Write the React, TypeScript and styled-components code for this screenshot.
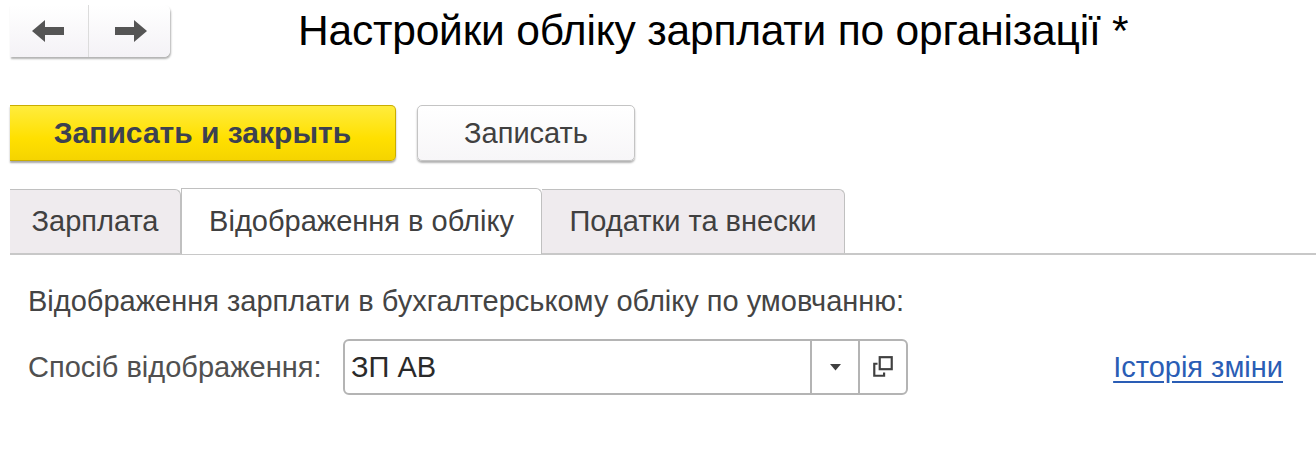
import React from 'react';
import styled, { createGlobalStyle } from 'styled-components';

const GlobalStyle = createGlobalStyle`
  body {
    margin: 0;
    background: #ffffff;
    font-family: 'Liberation Sans', Arial, sans-serif;
    color: #404040;
  }
`;

const Page = styled.div`
  width: 1316px;
  height: 475px;
  overflow: hidden;
  box-sizing: border-box;
  padding: 5px 0 0 10px;
  display: flex;
  flex-direction: column;
`;

const Header = styled.div`
  display: flex;
  align-items: center;
  height: 52px;
`;

const NavGroup = styled.div`
  display: flex;
  width: 160px;
  height: 52px;
  border-radius: 0 6px 6px 0;
  background: linear-gradient(#ffffff, #f4f2f6);
  box-shadow: 1px 2px 2px rgba(0, 0, 0, 0.3);
`;

const NavButton = styled.div<{ $first?: boolean }>`
  flex: ${(p) => (p.$first ? '0 0 78px' : '1')};
  display: flex;
  align-items: center;
  justify-content: center;
  border-right: ${(p) => (p.$first ? '1px solid #dcdcdc' : 'none')};
`;

const Title = styled.h1`
  margin: 0 0 0 128px;
  font-size: 42.5px;
  font-weight: normal;
  color: #000000;
  letter-spacing: -0.2px;
`;

const Toolbar = styled.div`
  display: flex;
  gap: 21px;
  margin-top: 48px;
  height: 56px;
`;

const Button = styled.div<{ $primary?: boolean }>`
  display: flex;
  align-items: center;
  justify-content: center;
  box-sizing: border-box;
  height: 56px;
  width: ${(p) => (p.$primary ? '386px' : '218px')};
  border-radius: ${(p) => (p.$primary ? '0 5px 5px 0' : '5px')};
  font-size: ${(p) => (p.$primary ? '30px' : '29px')};
  font-weight: ${(p) => (p.$primary ? 'bold' : 'normal')};
  color: ${(p) => (p.$primary ? '#3c4150' : '#404040')};
  background: ${(p) =>
    p.$primary
      ? 'linear-gradient(#ffec3d, #ffe000 60%, #f5d400)'
      : 'linear-gradient(#ffffff, #f7f6f8)'};
  border: 1px solid ${(p) => (p.$primary ? '#c9ad00' : '#c4c4c4')};
  border-left: ${(p) => (p.$primary ? 'none' : '1px solid #c4c4c4')};
  box-shadow: 0 2px 2px rgba(0, 0, 0, ${(p) => (p.$primary ? '0.35' : '0.3')});
`;

const Tabs = styled.div`
  display: flex;
  margin-top: 28px;
  height: 64px;
  border-bottom: 2px solid #c8c8c8;
`;

const Tab = styled.div<{ $active?: boolean; $w: number }>`
  box-sizing: border-box;
  width: ${(p) => p.$w}px;
  height: ${(p) => (p.$active ? '66px' : '64px')};
  margin-top: ${(p) => (p.$active ? '-1px' : '0')};
  display: flex;
  align-items: center;
  justify-content: center;
  font-size: 29px;
  color: #404040;
  background: ${(p) => (p.$active ? '#ffffff' : '#efebee')};
  border: 1px solid #c0c0c0;
  border-bottom: none;
  border-left: ${(p) => (p.$active ? '1px solid #c0c0c0' : 'none')};
  border-radius: 0 6px 0 0;
  position: relative;
  z-index: ${(p) => (p.$active ? 1 : 0)};
`;

const Content = styled.div`
  padding: 30px 0 0 18px;
  display: flex;
  flex-direction: column;
`;

const Caption = styled.div`
  font-size: 29px;
  color: #444444;
  height: 32px;
  line-height: 32px;
`;

const FormRow = styled.div`
  display: flex;
  align-items: center;
  margin-top: 22px;
`;

const Label = styled.div`
  width: 315px;
  font-size: 29px;
  color: #505050;
`;

const Field = styled.div`
  display: flex;
  width: 565px;
  height: 56px;
  box-sizing: border-box;
  border: 2px solid #b4b4b4;
  border-radius: 6px;
  background: #ffffff;
`;

const FieldValue = styled.div`
  flex: 1;
  display: flex;
  align-items: center;
  padding-left: 6px;
  font-size: 29px;
  color: #2a2a2a;
`;

const FieldButton = styled.div`
  width: 46px;
  display: flex;
  align-items: center;
  justify-content: center;
  border-left: 2px solid #b4b4b4;
`;

const HistoryLink = styled.a`
  margin-left: auto;
  margin-right: 33px;
  font-size: 29px;
  color: #2a5db5;
  text-decoration: underline;
  text-underline-offset: 4px;
`;

const ArrowLeft = () => (
  <svg width="34" height="22" viewBox="0 0 34 22">
    <path d="M0 11 L13 0 L13 7 L32 7 L32 15 L13 15 L13 22 Z" fill="#555555" />
  </svg>
);

const ArrowRight = () => (
  <svg width="34" height="22" viewBox="0 0 34 22">
    <path d="M34 11 L21 0 L21 7 L2 7 L2 15 L21 15 L21 22 Z" fill="#555555" />
  </svg>
);

const Caret = () => (
  <svg width="11" height="7" viewBox="0 0 11 7">
    <path d="M0 0 H11 L5.5 6.5 Z" fill="#404040" />
  </svg>
);

const OpenIcon = () => (
  <svg width="24" height="24" viewBox="0 0 22 22">
    <rect x="8" y="2" width="11" height="11" fill="none" stroke="#404040" strokeWidth="2" />
    <path d="M6 8 H3 V19 H12 V16" fill="none" stroke="#404040" strokeWidth="2" />
  </svg>
);

const tabs = [
  { label: 'Зарплата', w: 171 },
  { label: 'Відображення в обліку', w: 361, active: true },
  { label: 'Податки та внески', w: 303 },
];

export default function App() {
  return (
    <>
      <GlobalStyle />
      <Page>
        <Header>
          <NavGroup>
            <NavButton $first>
              <ArrowLeft />
            </NavButton>
            <NavButton>
              <ArrowRight />
            </NavButton>
          </NavGroup>
          <Title>Настройки обліку зарплати по організації *</Title>
        </Header>
        <Toolbar>
          <Button $primary>Записать и закрыть</Button>
          <Button>Записать</Button>
        </Toolbar>
        <Tabs>
          {tabs.map((t) => (
            <Tab key={t.label} $w={t.w} $active={t.active}>
              {t.label}
            </Tab>
          ))}
        </Tabs>
        <Content>
          <Caption>Відображення зарплати в бухгалтерському обліку по умовчанню:</Caption>
          <FormRow>
            <Label>Спосіб відображення:</Label>
            <Field>
              <FieldValue>ЗП АВ</FieldValue>
              <FieldButton>
                <Caret />
              </FieldButton>
              <FieldButton>
                <OpenIcon />
              </FieldButton>
            </Field>
            <HistoryLink href="#">Історія зміни</HistoryLink>
          </FormRow>
        </Content>
      </Page>
    </>
  );
}
